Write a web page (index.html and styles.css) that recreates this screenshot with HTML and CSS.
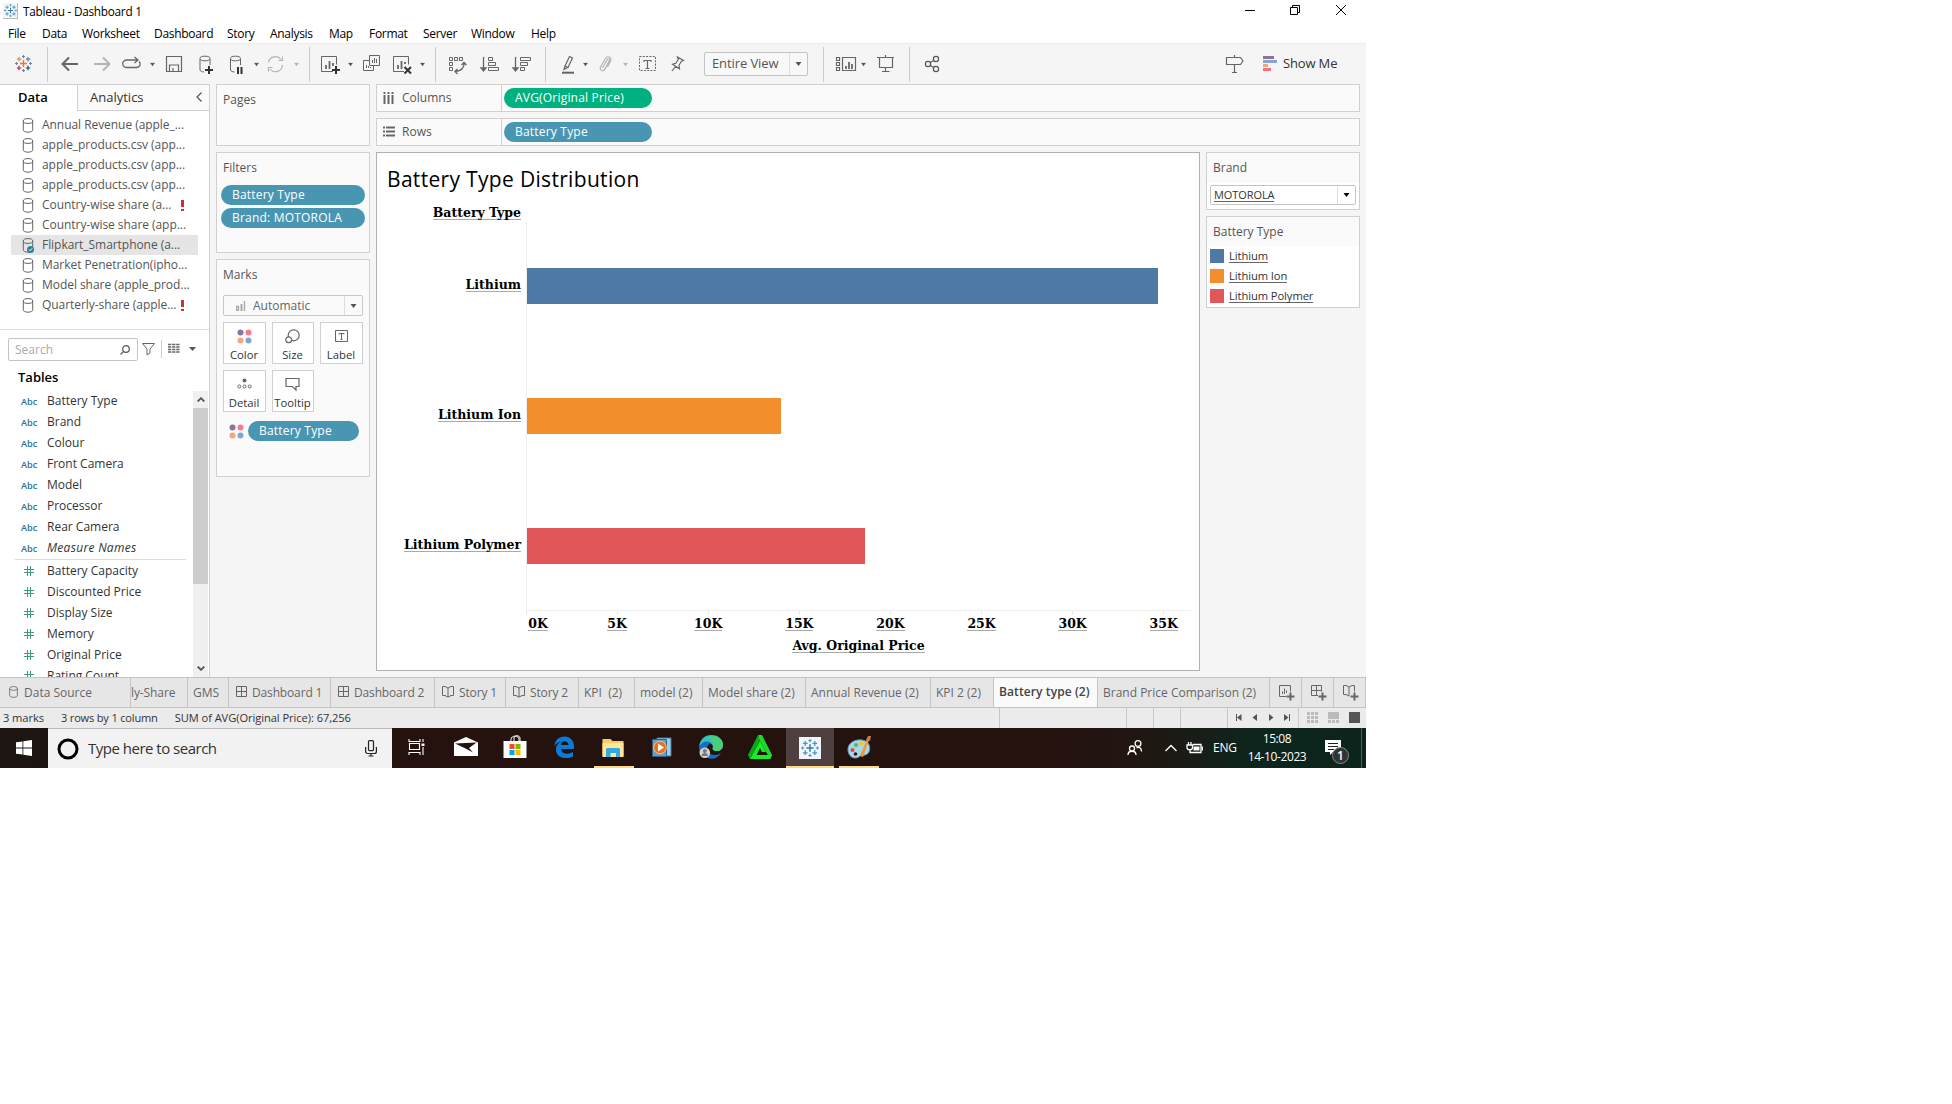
FILE: index.html
```html
<!DOCTYPE html>
<html lang="en">
<head>
<meta charset="utf-8">
<title>Tableau - Dashboard 1</title>
<link rel="stylesheet" href="styles.css">
</head>
<body>
<svg class="defs" width="0" height="0">
  <defs>
    <symbol id="cyl" viewBox="0 0 11 15"><g fill="none" stroke="#666"><ellipse cx="5.5" cy="3" rx="4.7" ry="2.4"/><path d="M.8 3v8.8c0 1.4 2 2.4 4.7 2.4s4.7-1 4.7-2.4V3"/></g></symbol>
    <symbol id="dots" viewBox="0 0 15 15"><circle cx="3.5" cy="3.5" r="3" fill="#8c739c"/><circle cx="11.500" cy="3.5" r="3" fill="#f97a89"/><circle cx="3.5" cy="11.500" r="3" fill="#f3a77d"/><circle cx="11.500" cy="11.500" r="3" fill="#84a5cf"/></symbol>
    <symbol id="dash" viewBox="0 0 11 11"><path d="M.5 .5h10v10H.5zM5.500 .5v10M.5 5.500h10" fill="none" stroke="#666"/></symbol>
    <symbol id="book" viewBox="0 0 12 12"><path d="M.5 .5H3l3 1.500L9 .5h2.500v9H9L6 11.200 3 9.500H.5zM6 2v9" fill="none" stroke="#666"/></symbol>
    <symbol id="caret" viewBox="0 0 6 4"><path d="M0 0h6L3 4z"/></symbol>
    <symbol id="hash" viewBox="0 0 10 10"><path d="M3.500 0v10M6.500 0v10M0 3.500h10M0 6.500h10" fill="none" stroke="#3a9e7d"/></symbol>
    <symbol id="spark" viewBox="0 0 17 17"><g fill="none"><path d="M8.500 5v7M5 8.500h7" stroke="var(--c1,#e8762d)" stroke-width="1.400"/><path d="M4 2v4.500M1.800 4.200h4.500" stroke="var(--c2,#eb912c)" stroke-width="1.200"/><path d="M13 2v4.500M10.800 4.200h4.500" stroke="var(--c3,#59879b)" stroke-width="1.200"/><path d="M4 10.700v4.500M1.800 13h4.500" stroke="var(--c4,#c72037)" stroke-width="1.200"/><path d="M13 10.700v4.500M10.800 13h4.500" stroke="var(--c5,#1f447e)" stroke-width="1.200"/><path d="M8.500 0v3.200M7 1.500h3M8.500 14v3M7 15.500h3M0 8.500h3M1.500 7v3M14 8.500h3M15.500 7v3" stroke="var(--c6,#6c82a8)"/></g></symbol>
  </defs>
</svg>
<div class="app">
  <header class="titlebar">
    <span class="appicon"><svg class="blue" width="13" height="13"><use href="#spark"/></svg></span>
    <span class="apptitle">Tableau - Dashboard 1</span>
    <svg class="winctl" width="126" height="18" viewBox="1240 0 126 18" fill="none" stroke="#000"><path d="M1245 10.500h10M1290.500 7.500h7v7h-7zM1292.500 7V5.500h7v7H1298M1336 5l10 10M1346 5l-10 10"/></svg>
  </header>
  <nav class="menu"><span>File</span><span>Data</span><span>Worksheet</span><span>Dashboard</span><span>Story</span><span>Analysis</span><span>Map</span><span>Format</span><span>Server</span><span>Window</span><span>Help</span></nav>

  <div class="toolbar">
    <div class="tgroup"><svg width="47" height="40" viewBox="0 44 47 40"><use href="#spark" x="15" y="55" width="17" height="17"/></svg></div>
    <div class="tgroup"><svg width="261" height="40" viewBox="48 44 261 40" fill="none" stroke="#666">
      <path d="M78 64H63M69 57.500L62.500 64l6.500 6.500" stroke-width="2"/>
      <path d="M94 64h15M103 57.500l6.500 6.500-6.500 6.500" stroke="#b4b4b4" stroke-width="2"/>
      <path d="M130 67.500h-3a4 3.500 0 0 1 0-7.500h11M129 67.500h7.500a4 3.500 0 0 0 2.500-6M134.500 57l3.500 3-3.500 3" stroke-width="1.300"/>
      <path d="M166.500 56.500h15v15h-15zM169.500 71v-6h9v6M173 71v-3" stroke-width="1.200"/>
      <path d="M200 59v11c0 1 2 2 4 2M210 59v6"/><ellipse cx="205" cy="58.500" rx="5" ry="2.300"/>
      <path d="M209 66v8M205 70h8" stroke="#333" stroke-width="2"/>
      <path d="M230.500 59v11c0 1 2 2 4 2M240.500 59v6"/><ellipse cx="235.500" cy="58.500" rx="5" ry="2.300"/>
      <path d="M238 67v7M241.500 67v7" stroke="#333" stroke-width="2"/>
      <path d="M268.500 62.500a7 7 0 0 1 12.500-3M282.500 65a7 7 0 0 1-12.500 4M278.500 60.500h4v-4M272.500 67.500h-4v4" stroke="#b4b4b4" stroke-width="1.200"/>
      <g fill="#555" stroke="none"><use href="#caret" x="150" y="62.500" width="5" height="4"/><use href="#caret" x="254" y="62.500" width="5" height="4"/></g><g fill="#b4b4b4" stroke="none"><use href="#caret" x="294" y="62.500" width="5" height="4"/></g></svg></div>
    <div class="tgroup"><svg width="125" height="40" viewBox="310 44 125 40" fill="none" stroke="#666">
      <path d="M333 71.500h-11.500v-15h15v8"/><path d="M326 69v-4M329.500 69v-8M333 66v-3" stroke-width="1.800"/><path d="M336 66v8M332 70h8" stroke="#333" stroke-width="2"/>
      <path d="M369.500 55.500h10v10h-10zM369 60.500h-5.500v10h10V66M372.500 63v-3M374.500 63v-5M376.500 63v-4M366.500 68v-3M368.500 68v-2M370.500 68v-1"/>
      <path d="M404 71.500h-10.500v-15h15v8"/><path d="M398 69v-4M401.500 69v-8M405 64v-2" stroke-width="1.800"/><path d="M404.500 67l6.500 6.500M411 67l-6.500 6.500" stroke="#333" stroke-width="2"/>
      <g fill="#555" stroke="none"><use href="#caret" x="348" y="62.500" width="5" height="4"/><use href="#caret" x="420" y="62.500" width="5" height="4"/></g></svg></div>
    <div class="tgroup"><svg width="109" height="40" viewBox="436 44 109 40" fill="none" stroke="#666">
      <path d="M449.500 57.500h3v3h-3zM454.500 57.500h3v3h-3zM459.500 57.500h3v3h-3zM449.500 62.500h3v3h-3zM449.500 67.500h3v3h-3z"/><path d="M464 63c.5 4-2 8-9 8.500M461.500 65l2.500-2.500 2.500 2.500M457.500 69l-2.500 2.500 2.500 2.500" stroke-width="1.300"/>
      <path d="M483.500 57v13M481 68h5l-2.500 3z" stroke-width="1.300"/><path d="M488.500 57.500h4v3h-4zM488.500 62.500h7v3h-7zM488.500 67.500h10v3h-10z"/>
      <path d="M515.500 57v13M513 68h5l-2.500 3z" stroke-width="1.300"/><path d="M520.500 57.500h10v3h-10zM520.500 62.500h7v3h-7zM520.500 67.500h4v3h-4z"/></svg></div>
    <div class="tgroup"><svg width="151" height="40" viewBox="546 44 151 40" fill="none" stroke="#666">
      <path d="M569.500 56.500l3 1.500-4.500 9.500-3-1.500zM565 66l-1 3.500 3.500-2" stroke-width="1.200"/><path d="M562 72.700h12" stroke-width="2"/>
      <path d="M602.500 68l4.500-8c1-2 3-1 2.300.7L605 69c-1.500 3-6 1.500-4.500-2l5-8.500c1.800-3.200 6.500-1.500 5 2.500l-3 6" stroke="#b4b4b4" stroke-width="1.200"/>
      <path d="M639.500 56.500h16v14h-16z" stroke-dasharray="2 1.300"/><path d="M644 62v-1.500h7V62M647.500 60.500v8M645.500 68.500h4" stroke-width="1.200"/>
      <path d="M677.500 57l6 3.500-2 .8-2.500 4 .5 3.500-7-4.500 3.300-1 2.500-4zM675.500 66.500l-3.500 4.500" stroke-width="1.200"/>
      <g fill="#555" stroke="none"><use href="#caret" x="583" y="62.500" width="5" height="4"/></g><g fill="#b4b4b4" stroke="none"><use href="#caret" x="623" y="62.500" width="5" height="4"/></g></svg>
      <div class="fit"><span>Entire View</span><i><svg width="7" height="4" fill="#555"><use href="#caret"/></svg></i></div></div>
    <div class="tgroup"><svg width="85" height="40" viewBox="824 44 85 40" fill="none" stroke="#666">
      <path d="M836.500 57.500h3v3h-3zM836.500 62.500h3v3h-3zM836.500 67.500h3v3h-3zM842.500 57.500h13v13h-13z" stroke-width="1.200"/><path d="M846 69v-3M849 69v-7M852 69v-5" stroke-width="1.800"/>
      <path d="M877 57.500h17M879.500 58v9.500h13V58M885.500 55v2M885.500 67.500v4M882 71.500h7.500" stroke-width="1.200"/>
      <g fill="#555" stroke="none"><use href="#caret" x="861" y="62.500" width="5" height="4"/></g></svg></div>
    <div class="tgroup last"><svg width="40" height="40" viewBox="910 44 40 40" fill="none" stroke="#555" stroke-width="1.200"><circle cx="928" cy="64" r="2.600"/><circle cx="936" cy="59" r="2.600"/><circle cx="936" cy="69" r="2.600"/><path d="M930.300 62.500l3.400-2.100M930.300 65.500l3.400 2.100"/></svg>
      <div class="showme"><svg width="60" height="40" viewBox="1220 44 60 40"><path d="M1226.500 57.500h14l2.500 3.500-2.500 3.500h-14zM1234.500 55v2.500M1234.500 64.500v8M1232 72.500h5" fill="none" stroke="#666" stroke-width="1.200"/><path d="M1263 56h11v3h-11z" fill="#8c739c"/><path d="M1263 60h14v3h-14z" fill="#84a5cf"/><path d="M1263 64h5v3h-5z" fill="#f3a77d"/><path d="M1263 68h8v3h-8z" fill="#f9707f"/></svg><span>Show Me</span></div></div>
  </div>

  <main class="work">
    <aside class="side">
      <div class="sidetabs"><span class="on">Data</span><span class="off">Analytics<svg width="6" height="10" viewBox="0 0 6 10"><path d="M5.500 .5L1 5l4.500 4.500" fill="none" stroke="#555" stroke-width="1.200"/></svg></span></div>
      <ul class="sources">
        <li><svg><use href="#cyl"/></svg>Annual Revenue (apple_...</li>
        <li><svg><use href="#cyl"/></svg>apple_products.csv (app...</li>
        <li><svg><use href="#cyl"/></svg>apple_products.csv (app...</li>
        <li><svg><use href="#cyl"/></svg>apple_products.csv (app...</li>
        <li><svg><use href="#cyl"/></svg>Country-wise share (a...<b></b></li>
        <li><svg><use href="#cyl"/></svg>Country-wise share (app...</li>
        <li class="sel"><svg><use href="#cyl"/><circle cx="9.500" cy="11.500" r="3.500" fill="#2f7f9f"/><path d="M8 11.500l1.200 1.200 2-2.400" fill="none" stroke="#fff"/></svg>Flipkart_Smartphone (a...</li>
        <li><svg><use href="#cyl"/></svg>Market Penetration(ipho...</li>
        <li><svg><use href="#cyl"/></svg>Model share (apple_prod...</li>
        <li><svg><use href="#cyl"/></svg>Quarterly-share (apple...<b></b></li>
      </ul>
      <div class="find"><div class="search">Search<svg width="10" height="10" fill="none" stroke="#555" stroke-width="1.200"><circle cx="6" cy="4" r="3.300"/><path d="M3.600 6.400L.5 9.500"/></svg></div>
        <svg width="64" height="22" viewBox="138 338 64 22" fill="none" stroke="#666"><path d="M142.500 343.500h12l-4.500 5.500v4l-3 2v-6z"/><path d="M161.500 340v18" stroke="#ccc"/><path d="M168 344.500h12M168 347h12M168 349.500h12M168 352h12" stroke-dasharray="3.300 .8" stroke-width="1.300"/><path d="M189 347h7l-3.500 4z" fill="#555" stroke="none"/></svg></div>
      <h2>Tables</h2>
      <div class="fields">
        <ul>
          <li><em>Abc</em>Battery Type</li><li><em>Abc</em>Brand</li><li><em>Abc</em>Colour</li><li><em>Abc</em>Front Camera</li><li><em>Abc</em>Model</li><li><em>Abc</em>Processor</li><li><em>Abc</em>Rear Camera</li><li class="names"><em>Abc</em>Measure Names</li>
          <li class="rule"></li>
          <li><svg><use href="#hash"/></svg>Battery Capacity</li><li><svg><use href="#hash"/></svg>Discounted Price</li><li><svg><use href="#hash"/></svg>Display Size</li><li><svg><use href="#hash"/></svg>Memory</li><li><svg><use href="#hash"/></svg>Original Price</li><li><svg><use href="#hash"/></svg>Rating Count</li>
        </ul>
        <div class="scroll"><i><svg width="8" height="5"><path d="M.7 4.500L4 1.200l3.300 3.300" fill="none" stroke="#555" stroke-width="1.800"/></svg></i><b></b><i><svg width="8" height="5"><path d="M.7 .5L4 3.800 7.300 .5" fill="none" stroke="#555" stroke-width="1.800"/></svg></i></div>
      </div>
    </aside>

    <section class="cards">
      <div class="card pages"><h3>Pages</h3></div>
      <div class="card filters"><h3>Filters</h3><div class="pill">Battery Type</div><div class="pill">Brand: MOTOROLA</div></div>
      <div class="card marks"><h3>Marks</h3>
        <div class="marktype"><svg width="10" height="10" fill="none" stroke="#aaa"><path d="M.5 5.500h2v4h-2zM8.500 0v10" stroke-width="1.400"/><path d="M5.500 3v7" stroke-width="2"/></svg><span>Automatic</span><i><svg width="7" height="4" fill="#555"><use href="#caret"/></svg></i></div>
        <div class="tiles">
          <div><svg width="15" height="15"><use href="#dots"/></svg>Color</div>
          <div><svg width="15" height="15" fill="none" stroke="#666" stroke-width="1.200"><circle cx="8.700" cy="6.300" r="5.500"/><circle cx="3.700" cy="10.700" r="2.900" fill="#fff"/></svg>Size</div>
          <div><svg width="15" height="15" fill="none" stroke="#666"><path d="M1.500 1.500h12v11h-12zM5 5.500v-1h5v1M7.500 4.500v6M6.500 10.500h2" /></svg>Label</div>
          <div><svg width="15" height="15" fill="none" stroke="#666"><circle cx="7.500" cy="3.500" r="2" fill="#666" stroke="none"/><circle cx="2.300" cy="9.500" r="1.500"/><circle cx="7.500" cy="9.500" r="1.500"/><circle cx="12.700" cy="9.500" r="1.500"/></svg>Detail</div>
          <div><svg width="15" height="15" fill="none" stroke="#666" stroke-width="1.200"><path d="M1 1.500h13v8h-3v3.500L7.500 9.500H1z"/></svg>Tooltip</div>
        </div>
        <div class="enc"><svg width="15" height="15"><use href="#dots"/></svg><div class="pill">Battery Type</div></div>
      </div>
    </section>

    <section class="center">
      <div class="shelf"><label><svg width="12" height="12"><path d="M1.500 0v2M5.500 0v2M9.500 0v2M1.500 3v9M5.500 3v9M9.500 3v9" stroke="#666" stroke-width="2"/></svg>Columns</label><div class="pill green">AVG(Original Price)</div></div>
      <div class="shelf"><label><svg width="12" height="12"><path d="M0 1.500h2M0 5.500h2M0 9.500h2M3 1.500h9M3 5.500h9M3 9.500h9" stroke="#666" stroke-width="2"/></svg>Rows</label><div class="pill">Battery Type</div></div>
      <div class="lower">
        <div class="view">
          <h1>Battery Type Distribution</h1>
          <div class="rowhead"><u>Battery Type</u></div>
          <div class="plot">
            <div class="cat"><u>Lithium</u></div><div class="lane"><i class="c1" style="width:631px"></i></div>
            <div class="cat"><u>Lithium Ion</u></div><div class="lane"><i class="c2" style="width:254px"></i></div>
            <div class="cat"><u>Lithium Polymer</u></div><div class="lane"><i class="c3" style="width:338px"></i></div>
          </div>
          <div class="ticks"><i></i><i></i><i></i><i></i><i></i><i></i><i></i><i></i></div>
          <div class="axis"><span class="zero"><u>0K</u></span><span><u>5K</u></span><span><u>10K</u></span><span><u>15K</u></span><span><u>20K</u></span><span><u>25K</u></span><span><u>30K</u></span><span><u>35K</u></span></div>
          <div class="axtitle"><u>Avg. Original Price</u></div>
        </div>
        <div class="right">
          <div class="card brand"><h3>Brand</h3><div class="combo"><u>MOTOROLA</u><i><svg width="7" height="4"><use href="#caret"/></svg></i></div></div>
          <div class="card legend"><h3>Battery Type</h3><p><i class="c1"></i><u>Lithium</u></p><p><i class="c2"></i><u>Lithium Ion</u></p><p><i class="c3"></i><u>Lithium Polymer</u></p></div>
        </div>
      </div>
    </section>
  </main>

  <nav class="tabs">
    <span class="ds"><svg width="9" height="12" viewBox="0 0 11 15" preserveAspectRatio="none"><use href="#cyl"/></svg>Data Source</span><span class="cut">ly-Share</span><span>GMS</span>
    <span class="ic"><svg width="11" height="11"><use href="#dash"/></svg>Dashboard 1</span><span class="ic"><svg width="11" height="11"><use href="#dash"/></svg>Dashboard 2</span>
    <span class="ic"><svg width="12" height="12"><use href="#book"/></svg>Story 1</span><span class="ic"><svg width="12" height="12"><use href="#book"/></svg>Story 2</span>
    <span>KPI&nbsp; (2)</span><span>model (2)</span><span>Model share (2)</span><span>Annual Revenue (2)</span><span>KPI 2 (2)</span><span class="active">Battery type (2)</span><span>Brand Price Comparison (2)</span>
    <span class="new"><svg width="16" height="16" fill="none" stroke="#666"><path d="M7 11.500H.5V.5h11v6M3.500 9V6.500M5.500 9V3.500M7.500 8V5.500"/><path d="M11.500 7.500v8M7.500 11.500h8" stroke-width="2"/></svg></span>
    <span class="new"><svg width="16" height="16" fill="none" stroke="#666"><path d="M7 10.500H.5V.5h10v6M5.500 .5v10M.5 5.500h10"/><path d="M11.500 7.500v8M7.500 11.500h8" stroke-width="2"/></svg></span>
    <span class="new"><svg width="16" height="16" fill="none" stroke="#666"><path d="M6 11.200L3 9.500H.5v-9H3L6 2 9 .5h2.500v6M6 2v9"/><path d="M11.500 7.500v8M7.500 11.500h8" stroke-width="2"/></svg></span>
  </nav>
  <div class="status"><span>3 marks</span><span>3 rows by 1 column</span><span>SUM of AVG(Original Price): 67,256</span>
    <svg width="367" height="20" viewBox="999 708 367 20"><path d="M999.500 708v20M1126.500 708v20M1153.500 708v20M1180.500 708v20M1227.500 708v20M1298.500 708v20" stroke="#c8c8c8"/><g fill="#555"><path d="M1236 714h1v7h-1zM1241.500 714v7l-4.500-3.500zM1257 714v7l-4.500-3.500zM1269 714v7l4.500-3.500zM1284 714v7l4.500-3.500zM1289 714h1v7h-1z"/><path d="M1349 712h11v11h-11z"/></g><g fill="#bbb"><path d="M1307 712h3v3h-3zM1311 712h3v3h-3zM1315 712h3v3h-3zM1307 716h3v3h-3zM1311 716h3v3h-3zM1315 716h3v3h-3zM1307 720h3v3h-3zM1311 720h3v3h-3zM1315 720h3v3h-3zM1328 712h11v7h-11zM1328 720h3v3h-3zM1332 720h3v3h-3zM1336 720h3v3h-3z"/></g></svg></div>

  <footer class="taskbar">
    <div class="start"><svg width="16" height="16" fill="#fff"><path d="M0 2.300l6.500-.9v6.200H0zM7.300 1.300L16 0v7.600H7.300zM0 8.400h6.500v6.200L0 13.700zM7.300 8.400H16V16l-8.700-1.300z"/></svg></div>
    <div class="cortana"><svg width="22" height="22"><circle cx="11" cy="11" r="9" fill="none" stroke="#000" stroke-width="3"/></svg><span>Type here to search</span><svg width="12" height="17" fill="none" stroke="#222" stroke-width="1.200"><rect x="3.500" y=".6" width="5" height="10" rx="1"/><path d="M.6 7v4.500a2 2 0 0 0 2 2h6.800a2 2 0 0 0 2-2V7M6 13.500V16M3.500 16h5"/></svg></div>
    <div class="apps">
      <div><svg viewBox="0 0 24 24"><g fill="none" stroke="#fff" stroke-width="1.100"><path d="M4 4v2.500h11V4M4 20v-2.500h11V20M4.500 8.500h10v6h-10zM18 4v3M18 12v8"/><path d="M16.500 8.500h3v2.500h-3z" fill="#fff" stroke="none"/></g></svg></div>
      <div><svg viewBox="0 0 24 24"><path d="M0 7.500l12-5.500 12 5.500V21H0z" fill="#fff"/><path d="M1 8.500l21.500-1L15 13l4 4.500-7.500-4z" fill="#241311"/></svg></div>
      <div><svg viewBox="0 0 24 24"><path d="M.5 6h23v17H.5z" fill="#fff"/><path d="M8 6V4.500c0-4.500 8-4.500 8 0V6M11 6V3c0-3 6-3 6 0v3" fill="none" stroke="#fff"/><path d="M6.500 9h5v5h-5z" fill="#f04e23"/><path d="M12.500 9h5v5h-5z" fill="#7fba00"/><path d="M6.500 15h5v5h-5z" fill="#00a3ee"/><path d="M12.500 15h5v5h-5z" fill="#fdb900"/></svg></div>
      <div><svg viewBox="0 0 24 24"><path d="M2.500 11C3 5 7 1.500 12.500 1.500c6 0 9.500 4.500 9.500 10V14H9c.5 5 7 6 12 3v4.500c-8 3.500-17 1-17-7C4 10 7 7.500 9.500 6.500 6.500 7 4 8.500 2.500 11zM9 10h7.500c-.5-5-7-5-7.500 0z" fill="#0a7bd8" fill-rule="evenodd"/></svg></div>
      <div class="run"><svg viewBox="0 0 24 24"><path d="M1.500 3h8l2 2h11v15h-21z" fill="#f5ce66"/><path d="M1.500 7h21v14h-21z" fill="#ffe79a"/><path d="M5 21v-7.500a1.500 1.500 0 0 1 1.500-1.500h11a1.500 1.500 0 0 1 1.500 1.500V21h-4v-4H9.500v4z" fill="#35a9e0"/></svg></div>
      <div><svg viewBox="0 0 24 24"><path d="M7 3h14v18H7z" fill="#9ed0ea" stroke="#3d7ca8"/><path d="M2.500 4.500h14v17h-14z" fill="#5fa2cc" stroke="#34617f"/><circle cx="10" cy="12.500" r="6.300" fill="#e9701d" stroke="#f5c08d"/><path d="M8 8.500l6 4-6 4z" fill="#fff"/></svg></div>
      <div><svg viewBox="0 0 24 24"><path d="M0 12C1 4 6 0 12 0c8 0 12 5 12 10 0 4-3 6-6 6-4 0-5-2-4-4 0-5-10-6-14 0z" fill="#35c1c4"/><path d="M13 1c7 0 11 4 11 9 0 4-3 6-6 6-4 0-5-2-4-4 2-5-1-8-6-9z" fill="#4fd35f" opacity=".75"/><path d="M0 12C2 7 8 5 12 8c-5 2-5 8-1 11 4 2 8 1 11-1-3 5-8 7-13 5C3 22 0 17 0 12z" fill="#176fc1"/><circle cx="5.800" cy="17.700" r="5.300" fill="#d2d2d2"/><circle cx="5.800" cy="16" r="2" fill="#777"/><path d="M2.500 21c0-4 6.500-4 6.500 0z" fill="#777"/></svg></div>
      <div><svg viewBox="0 0 24 24"><path d="M10 0h4l10 20-2 4-11-20z" fill="#20d82d"/><path d="M10 0L0 20l2 4 10-18z" fill="#0da71c"/><path d="M2 24h20l2-4H8.500l3.500-7 2 4h4L12 6z" fill="#14f024"/></svg></div>
      <div class="run here"><svg class="tile" viewBox="0 0 24 24"><path d="M1 1h22v22H1z" fill="#eef6fa"/><use href="#spark" x="3" y="3" width="18" height="18"/></svg></div>
      <div class="run paint"><svg viewBox="0 0 24 24"><path d="M1 15C0 7 8 3 15 4c7 1 9 7 7 12-2 4-7 3-9 4-4 4-11 2-12-5z" fill="#a9d5ee" stroke="#5b91b3"/><circle cx="5.500" cy="14" r="2" fill="#d94b3b"/><circle cx="9" cy="9" r="2" fill="#57b947"/><circle cx="14.500" cy="7.500" r="2" fill="#f4c430"/><circle cx="8.500" cy="18" r="1.800" fill="#301b16"/><path d="M13 20l7-17 2 1-6 17z" fill="#ef9b2f"/><path d="M19 4l2-4h3l-1 5z" fill="#b88152"/></svg></div>
    </div>
    <div class="tray">
      <svg width="54" height="24" viewBox="1126 736 54 24" fill="none" stroke="#fff" stroke-width="1.300"><circle cx="1138" cy="743.500" r="2.900"/><circle cx="1132" cy="748.500" r="2.500"/><path d="M1128 755c0-5 8-5 8 0M1136.500 748c2-1.500 5-.5 5 3.500M1165.500 751l5.500-5.500 5.500 5.500"/></svg>
      <svg class="bat" width="18" height="24" viewBox="1186 736 18 24" fill="none" stroke="#fff" stroke-width="1.300"><path d="M1193 744.500h8v8h-11v-2M1188.500 742v3M1191 742v3M1187 745h5.500v2.500a2.500 2 0 0 1-5.500 0zM1190 749.500v2"/><path d="M1193.500 746.500h6v4h-6zM1201.500 746.500h1.500v4h-1.500z" fill="#fff" stroke="none"/></svg>
      <span class="lang">ENG</span><div class="clock">15:08<br>14-10-2023</div>
      <div class="notes"><svg width="24" height="24"><path d="M0 0h16v12H8l-3 3v-3H0z" fill="#fff"/><path d="M3 3.500h10M3 6.500h10M3 9.500h6" stroke="#16231c"/><circle cx="15.500" cy="15.500" r="8" fill="#303432" stroke="#888"/></svg><b>1</b></div>
    </div>
  </footer>
</div>
</body>
</html>
```
FILE: styles.css
```css
* { box-sizing: border-box; margin: 0; padding: 0; }
body { background: #fff; font: 12px/16px "Open Sans", "Noto Sans", sans-serif; color: #333; }
ul { list-style: none; }
svg { display: block; flex: none; }
i, em { font-style: normal; }
.defs { position: absolute; }
.app { width: 1366px; height: 768px; overflow: hidden; display: flex; flex-direction: column; background: #f5f5f5; white-space: nowrap; }
.app > * { flex: none; }

.titlebar { height: 20px; background: #fff; display: flex; align-items: flex-start; color: #000; font-size: 11.800px; }
.appicon { width: 15px; height: 16px; margin: 3px 0 0 3px; padding: 1px; background: #f4f4f4; border: solid #bbb; border-width: 0 1px 1px 0; }
.blue, .tile { --c1: #2f7fb0; --c2: #4a96bf; --c3: #4a96bf; --c4: #4a96bf; --c5: #4a96bf; --c6: #4a96bf; }
.apptitle { margin: 3px 0 0 5px; letter-spacing: -.27px; }
.winctl { margin-left: auto; }
.menu { height: 23px; background: #fff; display: grid; grid-template-columns: 34px 40px 72px 73px 43px 59px 40px 54px 48px 60px 60px; padding: 6px 0 0 8px; color: #000; letter-spacing: -.3px; }

.toolbar { height: 41px; border-top: 1px solid #ececec; display: flex; }
.tgroup { display: flex; align-items: center; border-right: 1px solid transparent; background: linear-gradient(#ccc, #ccc) right 3px / 1px 35px no-repeat; background-origin: border-box; }
.tgroup.last { flex: 1; background: none; border: 0; }
.fit { width: 104px; height: 24px; margin: -1px 15px 0 7px; border: 1px solid #c4c4c4; border-radius: 2px; background: #f8f8f8; display: flex; align-items: center; font-size: 13px; color: #555; padding-left: 7px; }
.fit span { letter-spacing: -.1px; margin-top: -2px; }
.fit i, .marktype i, .combo i { margin-left: auto; width: 18px; align-self: stretch; border-left: 1px solid #ddd; display: flex; align-items: center; justify-content: center; }
.showme { margin-left: auto; display: flex; align-items: center; padding-right: 29px; font-size: 13px; color: #333; }
.showme span { margin: -2px 0 0 3px; width: 54px; letter-spacing: -.15px; }

.work { height: 593px; display: flex; }
.side { width: 210px; border: solid #d0d0d0; border-width: 1px 1px 0 0; background: #fff; display: flex; flex-direction: column; }
.sidetabs { height: 26px; display: flex; font-size: 13px; line-height: 24px; }
.sidetabs .on { width: 77px; padding-left: 18px; font-weight: 600; color: #000; }
.sidetabs .off { flex: 1; display: flex; align-items: center; justify-content: space-between; padding: 0 7px 2px 12px; border: solid #d0d0d0; border-width: 0 0 1px 1px; background: #fafafa; }
.sources { height: 219px; padding: 4px 11px 0; border-bottom: 1px solid #ddd; color: #555; }
.sources li { height: 20px; display: flex; align-items: center; padding-left: 11px; letter-spacing: -.05px; }
.sources svg { width: 14px; height: 15px; margin: 0 7px 0 -1px; }
.sources svg use { width: 11px; height: 15px; }
.sources .sel { background: #e5e5e5; }
.sources b { width: 3px; height: 11px; margin-left: auto; margin-right: 14px; background: linear-gradient(#c8323f 0 7px, transparent 7px 9px, #c8323f 9px); }
.find { height: 32px; padding: 8px 0 0 8px; display: flex; }
.search { width: 130px; height: 23px; border: 1px solid #c4c4c4; border-radius: 2px; display: flex; align-items: center; justify-content: space-between; padding: 0 7px 0 6px; color: #aaa; }
h2 { height: 29px; padding: 7px 0 0 18px; font-size: 13px; font-weight: 600; color: #000; }
.fields { height: 286px; display: flex; overflow: hidden; }
.fields ul { width: 193px; margin-top: -1px; }
.fields li { height: 21px; display: flex; align-items: center; padding-left: 21px; color: #333; }
.fields em { width: 26px; font-size: 9.200px; font-weight: 600; color: #2e7494; padding-top: 2px; }
.fields li svg { width: 10px; height: 10px; margin: 0 13px 0 3px; }
.fields .names { font-style: italic; letter-spacing: .3px; }
.fields .names em { letter-spacing: 0; }
.fields .rule { height: 1px; margin: 1px 7px 0 15px; background: #ddd; }
.scroll { width: 15px; background: #f0f0f0; display: flex; flex-direction: column; }
.scroll i { height: 17px; display: flex; align-items: center; justify-content: center; }
.scroll b { height: 176px; background: #cdcdcd; margin-bottom: auto; }

.card { border: 1px solid #d0d0d0; background: #fafafa; }
.card h3 { font-weight: 400; font-size: 12px; color: #555; padding: 7px 0 0 6px; height: 32px; }
.cards { width: 154px; margin-left: 6px; display: flex; flex-direction: column; gap: 6px; }
.pages { height: 62px; }
.filters { height: 101px; padding: 0 4px; }
.filters h3 { padding-left: 2px; }
.filters .pill { margin-bottom: 3px; }
.pill { height: 20px; border-radius: 10px; background: #4996b2; color: #fff; padding-left: 11px; line-height: 19px; font-weight: 500; letter-spacing: .2px; }
.green { background: #00b180; }
.marks { height: 218px; padding: 0 6px; }
.marks h3 { padding-left: 0; height: 35px; }
.marktype { height: 21px; border: 1px solid #c8c8c8; border-radius: 2px; display: flex; align-items: center; padding-left: 12px; color: #666; }
.marktype span { margin-left: 7px; }
.tiles { margin-top: 6px; display: grid; grid-template-columns: 43px 42px 43px; grid-auto-rows: 42px; gap: 6px; }
.tiles div { border: 1px solid #d0d0d0; background: #fff; display: flex; flex-direction: column; align-items: center; padding: 6px 1px 0 0; font-size: 11.300px; color: #333; }
.tiles svg { margin-bottom: 3px; }
.enc { display: flex; align-items: center; margin-top: 9px; padding-left: 6px; gap: 4px; }
.enc .pill { width: 111px; }

.center { margin-left: 6px; width: 984px; display: flex; flex-direction: column; gap: 6px; }
.shelf { height: 28px; border: 1px solid #d0d0d0; background: #fafafa; display: flex; align-items: center; }
.shelf label { width: 125px; height: 26px; border-right: 1px solid #d0d0d0; display: flex; align-items: center; gap: 7px; padding-left: 6px; color: #555; }
.shelf .pill { width: 148px; margin-left: 2px; }
.lower { display: flex; gap: 6px; }
.view { width: 824px; height: 519px; border: 1px solid #b0b0b0; background: #fff; color: #000; font: bold 12.500px/16px "DejaVu Serif", serif; }
u { text-decoration: none; border-bottom: 1px solid #aaa; line-height: 13px; display: inline-block; }
h1 { font: 21px/28px "Open Sans", sans-serif; padding: 12px 0 0 10px; height: 50px; letter-spacing: .32px; }
.rowhead { height: 18px; width: 144px; text-align: right; padding-top: 2px; }
.plot { display: grid; grid-template-columns: 149px 665px; grid-template-rows: repeat(3, 130px); height: 390px; }
.cat { padding-right: 5px; display: flex; justify-content: flex-end; align-items: center; padding-bottom: 2px; }
.lane { border-left: 1px solid #eee; display: flex; align-items: center; }
.lane i { height: 36px; }
.lane:last-child { border-bottom: 1px solid #eee; }
.ticks { display: flex; gap: 90px; margin-left: 149px; height: 4px; }
.ticks i { width: 1px; background: #e8e8e8; }
.axis { display: grid; grid-template-columns: repeat(8, 91.100px); margin-left: 103.500px; height: 18px; text-align: center; padding-top: 1px; }
.axis .zero { padding-left: 24px; }
.axtitle { margin-left: 149px; width: 665px; text-align: center; padding-top: 5px; }
.c1 { background: #4e79a7; }
.c2 { background: #f28e2b; }
.c3 { background: #e15759; }

.right { width: 154px; display: flex; flex-direction: column; gap: 6px; color: #333; }
.right .card { background: #fff; }
.right h3 { background: #fafafa; height: 30px; }
.right u { border-color: #666; font-size: 11px; letter-spacing: -.08px; }
.brand { height: 58px; }
.combo { margin: 2px 3px 0; height: 20px; border: 1px solid #c4c4c4; border-radius: 2px; display: flex; align-items: center; padding-left: 3px; }
.legend { height: 92px; }
.legend h3 { height: 29px; }
.legend p { height: 20px; display: flex; align-items: center; padding-left: 3px; gap: 5px; }
.legend p i { width: 14px; height: 14px; }
.legend p u { font-size: 11.200px; }

.tabs { height: 31px; border: solid #c4c4c4; border-width: 1px 0; background: #e6e6e6; display: grid; grid-template-columns: 131px 57px 41px 102px 104px 71px 73px 56px 68px 103px 125px 63px 104px 172px 32px 32px 32px; color: #666; }
.tabs span { border-right: 1px solid #c4c4c4; display: flex; align-items: center; padding-left: 5px; overflow: hidden; }
.tabs .ds { padding-left: 9px; gap: 6px; }
.tabs .ic { padding-left: 7px; gap: 5px; letter-spacing: -.15px; }
.tabs .ic svg, .tabs .ds svg { margin-top: -2px; }
.tabs .cut { padding-left: 0; letter-spacing: -.1px; }
.tabs .active { background: #fafafa; font-weight: 600; color: #444; padding-bottom: 2px; font-size: 12px; letter-spacing: .1px; }
.tabs .new { padding-left: 9px; }
.status { height: 20px; background: #ebebeb; display: flex; align-items: center; padding-left: 3px; gap: 17px; font-size: 11.100px; color: #333; letter-spacing: -.05px; }
.status span:nth-child(2) { letter-spacing: -.2px; }
.status svg { margin-left: auto; }

.taskbar { height: 40px; display: flex; background: linear-gradient(90deg, #1c1512 0, #25120f 30%, #24120f 78%, #1e1813 85%, #0d261d 92%, #0c241b); color: #fff; }
.start { width: 48px; display: grid; place-items: center; }
.cortana { width: 344px; background: #f2f2f2; border-top: 1px solid #bbb; color: #333; display: flex; align-items: center; padding: 0 15px 0 9px; font: 15px/20px "Open Sans", sans-serif; }
.cortana span { margin: -2px auto 0 9px; letter-spacing: -.5px; }
.apps { display: flex; width: 492px; }
.apps div { flex: none; width: 49px; display: grid; place-items: center; border-bottom: 2px solid transparent; }
.apps svg { width: 24px; height: 24px; }
.apps .run { border-bottom: 0; background: linear-gradient(#ffd980, #ffd980) 6px 38px / 40px 2px no-repeat; }
.apps .here { background: linear-gradient(#ffd980, #ffd980) 0 38px / 48px 2px no-repeat, #4e403e; margin-left: 2px; width: 48px; }
.apps .paint { background-position: 5px 38px; }
.tray { margin-left: auto; display: flex; align-items: center; width: 240px; font-size: 12px; background: linear-gradient(#4c5f57, #4c5f57) 235px 0 / 1px 40px no-repeat; }
.bat { margin-left: 6px; }
.lang { width: 28px; margin-left: 9px; letter-spacing: -.2px; }
.clock { width: 62px; margin-left: 5px; text-align: center; line-height: 18px; letter-spacing: -.4px; margin-top: -1px; }
.notes { position: relative; margin-left: 17px; width: 24px; height: 24px; margin-top: 8px; }
.notes b { position: absolute; left: 12px; top: 8px; font: 600 12px/16px "Open Sans", sans-serif; }
```
